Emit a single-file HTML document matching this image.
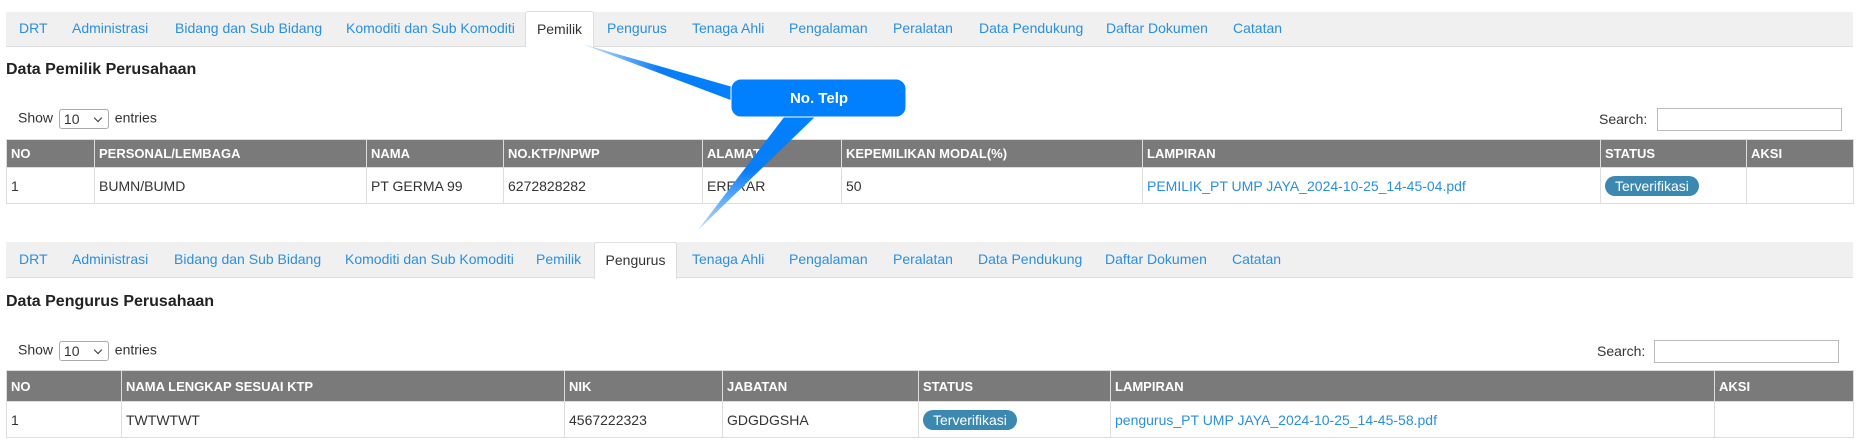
<!DOCTYPE html>
<html><head><meta charset="utf-8"><style>
*{margin:0;padding:0;box-sizing:border-box}
body{width:1862px;height:443px;background:#fff;font-family:"Liberation Sans",Arial,sans-serif;font-size:14px;color:#333;position:relative;overflow:hidden}
.bar{position:absolute;left:6px;width:1847px;background:#f0f0f0;border-bottom:1px solid #ddd}
.tab{position:absolute;color:#2a8fe0;font-size:14px;white-space:nowrap}
.act{position:absolute;background:#fff;border:1px solid #ddd;border-bottom:none;border-radius:3px 3px 0 0;color:#333;text-align:center}
h3{position:absolute;left:6px;font-size:16px;font-weight:bold;color:#222}
.show{position:absolute;left:18px;font-size:14px}
.sel{display:inline-block;width:50px;height:20px;border:1px solid #aaa;border-radius:3px;vertical-align:middle;font-size:14px;padding-left:4px;line-height:18px;position:relative;margin:0 2px}
.sel:after{content:"";position:absolute;right:7px;top:5px;width:5px;height:5px;border-right:1.5px solid #333;border-bottom:1.5px solid #333;transform:rotate(45deg)}
.search{position:absolute;font-size:14px}
.sbox{position:absolute;border:1px solid #bbb;background:#fff}
table{position:absolute;left:6px;width:1847px;border-collapse:collapse;table-layout:fixed}
th{background:#7a7a7a;color:#fff;text-align:left;font-size:13px;font-weight:bold;padding:0 4px;border:1px solid #ddd;height:28px}
td{border:1px solid #ddd;padding:0 4px;font-size:14px;height:36px}
a{color:#2a8fe0;text-decoration:none}
.b{display:inline-block;background:#3b88b0;color:#fff;border-radius:11px;padding:2px 10px;font-size:14px}
</style></head><body>

<div class="bar" style="top:12px;height:35px"></div>
<div class="act" style="left:525px;top:11px;width:69px;height:36px;line-height:34px">Pemilik</div>
<span class="tab" style="left:19px;top:20px">DRT</span>
<span class="tab" style="left:72px;top:20px">Administrasi</span>
<span class="tab" style="left:175px;top:20px">Bidang dan Sub Bidang</span>
<span class="tab" style="left:346px;top:20px">Komoditi dan Sub Komoditi</span>
<span class="tab" style="left:607px;top:20px">Pengurus</span>
<span class="tab" style="left:692px;top:20px">Tenaga Ahli</span>
<span class="tab" style="left:789px;top:20px">Pengalaman</span>
<span class="tab" style="left:893px;top:20px">Peralatan</span>
<span class="tab" style="left:979px;top:20px">Data Pendukung</span>
<span class="tab" style="left:1106px;top:20px">Daftar Dokumen</span>
<span class="tab" style="left:1233px;top:20px">Catatan</span>

<h3 style="top:61px">Data Pemilik Perusahaan</h3>
<div class="show" style="top:109px">Show <span class="sel">10</span> entries</div>
<div class="search" style="left:1599px;top:111px">Search:</div>
<div class="sbox" style="left:1657px;top:108px;width:185px;height:23px"></div>

<table style="top:139px">
<colgroup><col style="width:88px"><col style="width:272px"><col style="width:137px"><col style="width:199px"><col style="width:139px"><col style="width:301px"><col style="width:458px"><col style="width:146px"><col style="width:107px"></colgroup>
<tr><th>NO</th><th>PERSONAL/LEMBAGA</th><th>NAMA</th><th>NO.KTP/NPWP</th><th>ALAMAT</th><th>KEPEMILIKAN MODAL(%)</th><th>LAMPIRAN</th><th>STATUS</th><th>AKSI</th></tr>
<tr><td>1</td><td>BUMN/BUMD</td><td>PT GERMA 99</td><td>6272828282</td><td>ERERAR</td><td>50</td><td><a>PEMILIK_PT UMP JAYA_2024-10-25_14-45-04.pdf</a></td><td><span class="b">Terverifikasi</span></td><td></td></tr>
</table>

<div class="bar" style="top:242px;height:36px"></div>
<div class="act" style="left:594px;top:242px;width:83px;height:37px;line-height:35px">Pengurus</div>
<span class="tab" style="left:19px;top:251px">DRT</span>
<span class="tab" style="left:72px;top:251px">Administrasi</span>
<span class="tab" style="left:174px;top:251px">Bidang dan Sub Bidang</span>
<span class="tab" style="left:345px;top:251px">Komoditi dan Sub Komoditi</span>
<span class="tab" style="left:536px;top:251px">Pemilik</span>
<span class="tab" style="left:692px;top:251px">Tenaga Ahli</span>
<span class="tab" style="left:789px;top:251px">Pengalaman</span>
<span class="tab" style="left:893px;top:251px">Peralatan</span>
<span class="tab" style="left:978px;top:251px">Data Pendukung</span>
<span class="tab" style="left:1105px;top:251px">Daftar Dokumen</span>
<span class="tab" style="left:1232px;top:251px">Catatan</span>

<h3 style="top:293px">Data Pengurus Perusahaan</h3>
<div class="show" style="top:341px">Show <span class="sel">10</span> entries</div>
<div class="search" style="left:1597px;top:343px">Search:</div>
<div class="sbox" style="left:1654px;top:340px;width:185px;height:23px"></div>

<table style="top:370px">
<colgroup><col style="width:115px"><col style="width:443px"><col style="width:158px"><col style="width:196px"><col style="width:192px"><col style="width:604px"><col style="width:139px"></colgroup>
<tr><th style="height:31px">NO</th><th>NAMA LENGKAP SESUAI KTP</th><th>NIK</th><th>JABATAN</th><th>STATUS</th><th>LAMPIRAN</th><th>AKSI</th></tr>
<tr><td style="height:34px">1</td><td>TWTWTWT</td><td>4567222323</td><td>GDGDGSHA</td><td><span class="b">Terverifikasi</span></td><td><a>pengurus_PT UMP JAYA_2024-10-25_14-45-58.pdf</a></td><td></td></tr>
</table>

<svg style="position:absolute;left:0;top:0" width="1862" height="443">
<defs><linearGradient id="g" x1="0" y1="0" x2="1" y2="0"><stop offset="0" stop-color="#cfe6ff"/><stop offset="0.5" stop-color="#0a7df5"/><stop offset="1" stop-color="#0080ff"/></linearGradient>
<linearGradient id="g2" x1="0" y1="1" x2="0" y2="0"><stop offset="0" stop-color="#bcdcff"/><stop offset="0.5" stop-color="#0a7df5"/><stop offset="1" stop-color="#0080ff"/></linearGradient></defs>
<polygon points="582,44 736,88 736,102" fill="url(#g)"/>
<polygon points="788,112 820,112 698,230" fill="url(#g2)"/>
<rect x="731" y="79" width="175" height="38" rx="10" fill="#0080ff" stroke="#fff" stroke-width="1"/>
<text x="819" y="103" fill="#fff" font-family="Liberation Sans,Arial,sans-serif" font-weight="bold" font-size="15" text-anchor="middle">No. Telp</text>
</svg>
</body></html>
